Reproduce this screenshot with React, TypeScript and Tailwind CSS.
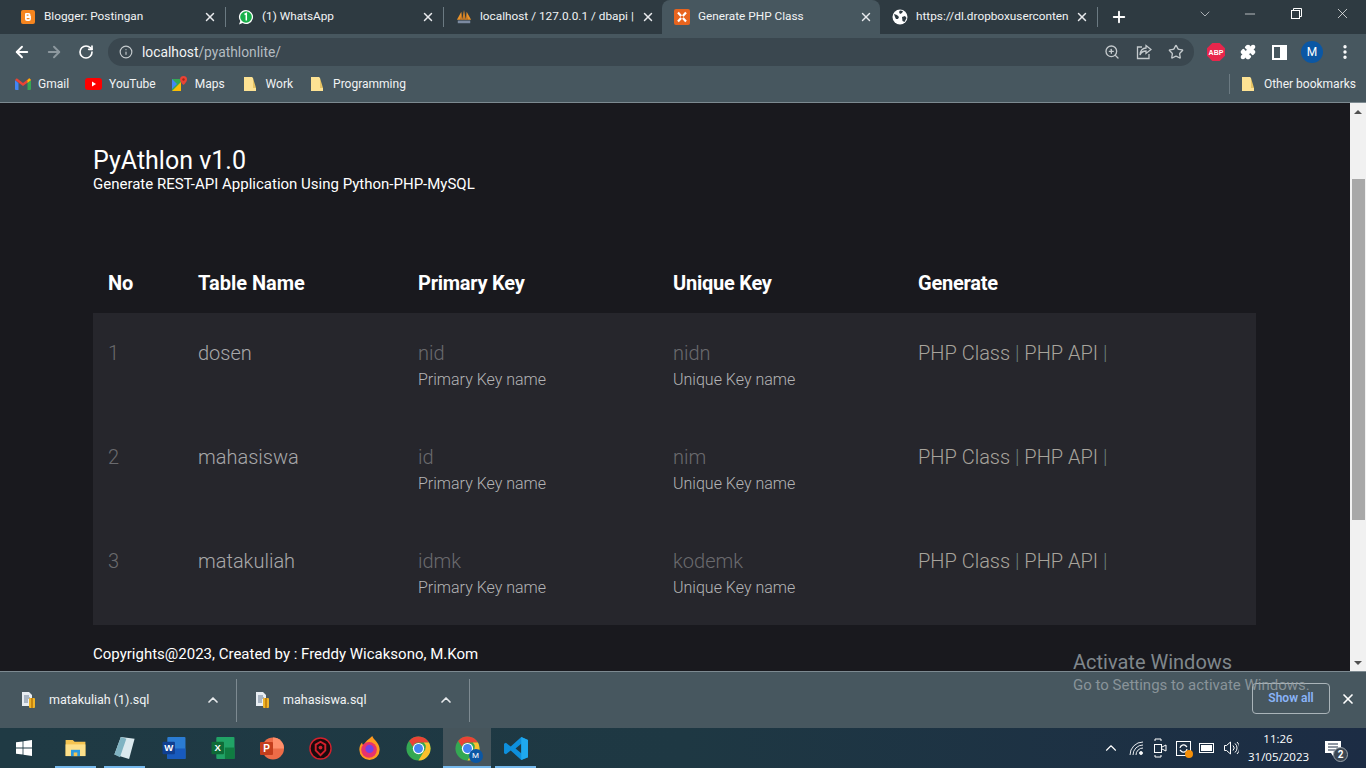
import React from "react";
import { ArrowLeft, ArrowRight, RotateCw, Info, ZoomIn, Star, Puzzle, EllipsisVertical, X, Plus, Minus, ChevronDown, ChevronUp } from "lucide-react";

// =======================================================================
// SMALL DRAWN ICONS
// =======================================================================
function Folder() {
  return (
    <svg width="12" height="14" viewBox="0 0 12 14">
      <path d="M0 0h8l1 1v10h3v3H0z" fill="#fde293" />
      <path d="M9 1v10h3z" fill="#e8c565" />
    </svg>
  );
}

function BloggerIcon() {
  return (
    <svg width="16" height="16" viewBox="0 0 16 16">
      <rect x="1" y="1" width="14" height="14" rx="2" fill="#f5851f" />
      <path d="M5.500 4h3.200A2 2 0 0 1 10.500 6v1h.4v3a2 2 0 0 1-2 2H7a2 2 0 0 1-2-2V5z" fill="#fff" />
      <path d="M6.700 6.200h1.800M6.700 9.600h2.800" stroke="#f5851f" strokeWidth="1.200" />
    </svg>
  );
}

function WhatsappIcon() {
  return (
    <svg width="16" height="17" viewBox="0 0 16 17">
      <path d="M8 1a7 7 0 1 1-3.400 13.100L1 15.500l1.300-3.400A7 7 0 0 1 8 1z" fill="#fff" />
      <circle cx="8" cy="8" r="5.800" fill="#19b04a" />
      <path d="M6.500 5.500l1.800-1V11.500" stroke="#fff" strokeWidth="1.500" fill="none" />
    </svg>
  );
}

function PmaIcon() {
  return (
    <svg width="18" height="16" viewBox="0 0 18 16">
      <path d="M1 11L6 2l1 9zM7 11l2-11 2 11zM11 11l1-9 5 9z" fill="#e8922a" />
      <path d="M8.500 11L9 2l.5 9zM5 11l1-6v6zM13 11l-1-6v6z" fill="#8f4a14" />
      <rect x="2" y="12" width="14" height="3" fill="#7c8aa0" />
    </svg>
  );
}

function XamppIcon() {
  return (
    <svg width="16" height="16" viewBox="0 0 16 16">
      <rect width="16" height="16" rx="2" fill="#e8641e" />
      <path d="M4 3.500L12 12.500M12 3.500L4 12.500" stroke="#fff" strokeWidth="2.200" />
      <path d="M6.500 8a1.500 1.500 0 1 0 3 0 1.500 1.500 0 1 0-3 0" fill="#e8641e" />
    </svg>
  );
}

function GlobeIcon() {
  return (
    <svg width="16" height="16" viewBox="0 0 16 16">
      <circle cx="8" cy="8" r="7.500" fill="#fff" />
      <path d="M2 5l3 1 2 2-1 2-2 0-1-2zM8 1.500l3 .5-1 2-2 1-1-2zM10 8l3-1 1.500 2-2 4-2-1z" fill="#2e3a41" />
    </svg>
  );
}

function GmailIcon() {
  return (
    <svg width="16" height="12" viewBox="0 0 16 12">
      <path d="M0 2v9a1 1 0 0 0 1 1h2.500V5z" fill="#4285f4" />
      <path d="M16 2v9a1 1 0 0 1-1 1h-2.500V5z" fill="#34a853" />
      <path d="M0 2l1.800-1.700L8 5l6.200-4.700L16 2 8 8z" fill="#ea4335" />
      <path d="M12.500 2.200L14.200.3 16 2l-3.500 3z" fill="#fbbc04" />
    </svg>
  );
}

function YoutubeIcon() {
  return (
    <svg width="17" height="12" viewBox="0 0 17 12">
      <rect width="17" height="12" rx="3" fill="#f00" />
      <path d="M7 3.500v5L11 6z" fill="#fff" />
    </svg>
  );
}

function MapsIcon() {
  return (
    <svg width="16" height="16" viewBox="0 0 16 16">
      <path d="M1 3h9v12H1z" fill="#34a853" />
      <path d="M1 15L10 6v9z" fill="#fbbc04" />
      <path d="M1 3l5 5-5 5z" fill="#4285f4" />
      <path d="M12.500 0A3.500 3.500 0 0 1 16 3.500C16 6 12.500 9 12.500 9S9 6 9 3.500A3.500 3.500 0 0 1 12.500 0z" fill="#ea4335" />
      <circle cx="12.500" cy="3.500" r="1.200" fill="#a52714" />
    </svg>
  );
}

function ShareIcon() {
  return (
    <svg width="16" height="16" viewBox="0 0 16 16" fill="none" stroke="#c4cacd" strokeWidth="1.300">
      <path d="M6 3H1.500v11.500H13V10" />
      <path d="M10 1.500L15 5.500 10 9.500V7C7 7 5 8.500 4 11c0-4 2.500-7 6-7z" />
    </svg>
  );
}

function AbpIcon() {
  return (
    <svg width="18" height="18" viewBox="0 0 18 18">
      <path d="M5.300 0h7.400L18 5.300v7.400L12.700 18H5.300L0 12.700V5.300z" fill="#e8264c" />
      <text x="9" y="11.500" fontSize="7" fontWeight="700" textAnchor="middle" fill="#fff" fontFamily="Liberation Sans, sans-serif">ABP</text>
    </svg>
  );
}

function SqlFile() {
  return (
    <svg width="15" height="16" viewBox="0 0 15 16">
      <path d="M1 0h7l3 3v11H1z" fill="#e8edf2" />
      <path d="M3 4h5M3 6h6M3 8h4M3 10h4" stroke="#6b7d92" />
      <rect x="8" y="6" width="6" height="10" rx="1" fill="#f0b429" />
      <rect x="10" y="6" width="2" height="10" fill="#c78610" />
    </svg>
  );
}

function ChromeLogo() {
  return (
    <svg width="25" height="25" viewBox="0 0 28 28">
      <circle cx="14" cy="14" r="13.500" fill="#34a853" />
      <path d="M14 .5a13.500 13.500 0 0 1 11.700 6.800H14A6.700 6.700 0 0 0 7.700 12L3.500 5.500A13.500 13.500 0 0 1 14 .5z" fill="#ea4335" />
      <path d="M25.700 7.300A13.500 13.500 0 0 1 14 27.500l5.800-10a6.700 6.700 0 0 0 0-10.200z" fill="#fbc02d" />
      <circle cx="14" cy="14" r="6.300" fill="#fff" />
      <circle cx="14" cy="14" r="5" fill="#4285f4" />
    </svg>
  );
}

// =======================================================================
// CHROME: TABS, TOOLBAR, BOOKMARKS
// =======================================================================
const tabs = [
  { title: "Blogger: Postingan", icon: <BloggerIcon /> },
  { title: "(1) WhatsApp", icon: <WhatsappIcon /> },
  { title: "localhost / 127.0.0.1 / dbapi |", icon: <PmaIcon /> },
  { title: "Generate PHP Class", icon: <XamppIcon />, active: true },
  { title: "https://dl.dropboxuserconten", icon: <GlobeIcon /> },
];

function TabBar() {
  return (
    <div className="h-[34px] flex items-stretch bg-[#2e3a41] pl-2 shrink-0">
      {tabs.map((tab, i) => (
        <div
          key={tab.title}
          className={`w-[218px] flex items-center pl-3 pr-[7px] gap-2 rounded-t-lg ${tab.active ? "bg-[#47575f]" : ""}`}
        >
          <span className="w-4 flex justify-center shrink-0">{tab.icon}</span>
          <span className="flex-1 min-w-0 whitespace-nowrap text-[11.800px] text-[#f1f3f4]">{tab.title}</span>
          <X size={14} strokeWidth={2.5} className="text-[#e8eaed] shrink-0" />
          {(i === 0 || i === 1 || i === 4) && <span className="w-px h-5 bg-[#6b7a82] shrink-0 -mr-[7px]" />}
        </div>
      ))}
      <div className="flex items-center ml-[12px]">
        <Plus size={18} strokeWidth={2.5} className="text-white" />
      </div>
      <div className="pt-[6px] ml-[69px]">
        <ChevronDown size={16} strokeWidth={1} className="text-[#e8eaed]" />
      </div>
      <div className="pt-[6px] ml-[29px]">
        <Minus size={16} strokeWidth={1} className="text-white" />
      </div>
      <div className="pt-[8px] ml-[33px]">
        <svg width="11" height="11" viewBox="0 0 11 11" fill="none" stroke="#fff">
          <rect x="0.500" y="2.500" width="8" height="8" />
          <path d="M2.500 2.500V.5h8v8H8.500" />
        </svg>
      </div>
      <div className="pt-[5px] ml-[32px]">
        <X size={17} strokeWidth={1} className="text-white" />
      </div>
    </div>
  );
}

function Toolbar() {
  return (
    <div className="h-[37px] bg-[#47575f] flex items-center pb-[1px] pl-[13px] shrink-0">
      <ArrowLeft size={18} strokeWidth={2.5} className="text-white" />
      <ArrowRight size={18} strokeWidth={2.5} className="text-[#8d989e] ml-[14px]" />
      <RotateCw size={16} strokeWidth={2.5} className="text-white ml-[15px]" />
      <div className="w-[1086px] h-[28px] ml-[14px] rounded-full bg-[#3a474f] flex items-center pl-[11px] pr-[10px]">
        <Info size={14} className="text-[#c4cacd]" />
        <span className="ml-[9px] text-[13.800px] text-[#f1f3f4]">localhost<span className="text-[#b4bcc1]">/pyathlonlite/</span></span>
        <ZoomIn size={16} className="text-[#c4cacd] ml-auto" />
        <span className="ml-4"><ShareIcon /></span>
        <Star size={16} className="text-[#c4cacd] ml-4" />
      </div>
      <span className="ml-[13px] flex"><AbpIcon /></span>
      <Puzzle size={16} className="text-white fill-white ml-[15px]" />
      <span className="ml-[16px] w-[15px] h-[15px] border-[2px] border-white flex justify-end"><span className="w-[5px] bg-white" /></span>
      <div className="w-[22px] h-[22px] ml-[14px] rounded-full bg-[#0b57a4] flex items-center justify-center text-[12px] text-white">M</div>
      <EllipsisVertical size={18} strokeWidth={2.5} className="text-white ml-[13px]" />
    </div>
  );
}

function Bookmark({ icon, label, className = "" }: { icon: React.ReactNode; label: string; className?: string }) {
  return (
    <div className={`flex items-center ${className}`}>
      {icon}
      <span className="text-[12px] text-[#f1f3f4] whitespace-nowrap">{label}</span>
    </div>
  );
}

function BookmarksBar() {
  return (
    <div className="h-[32px] bg-[#47575f] border-b border-[#7d8a91] flex items-center pb-[5px] pl-[15px] shrink-0">
      <Bookmark icon={<GmailIcon />} label="Gmail" className="gap-[7px]" />
      <Bookmark icon={<YoutubeIcon />} label="YouTube" className="gap-[7px] ml-4" />
      <Bookmark icon={<MapsIcon />} label="Maps" className="gap-2 ml-[15px]" />
      <Bookmark icon={<Folder />} label="Work" className="gap-[10px] ml-[19px]" />
      <Bookmark icon={<Folder />} label="Programming" className="gap-[10px] ml-[18px]" />
      <span className="ml-auto w-px h-[20px] bg-[#6b7a82]" />
      <Bookmark icon={<Folder />} label="Other bookmarks" className="gap-[10px] ml-3 pr-[10px]" />
    </div>
  );
}

// =======================================================================
// PAGE CONTENT
// =======================================================================
const rows = [
  { no: 1, table: "dosen", pk: "nid", uk: "nidn" },
  { no: 2, table: "mahasiswa", pk: "id", uk: "nim" },
  { no: 3, table: "matakuliah", pk: "idmk", uk: "kodemk" },
];

function Page() {
  return (
    <div className="flex-1 min-h-0 flex bg-[#19191e]">
      <div className="flex-1 min-w-0 pl-[93px] pr-[94px] pt-[44px] font-['Roboto']">
        <h1 className="text-[25px] leading-[28px] text-white">PyAthlon v1.0</h1>
        <p className="text-[15px] leading-[18px] text-white">Generate REST-API Application Using Python-PHP-MySQL</p>

        <table className="w-full mt-[58px] table-fixed border-collapse">
          <colgroup>
            <col className="w-[105px]" />
            <col className="w-[220px]" />
            <col className="w-[255px]" />
            <col className="w-[245px]" />
            <col />
          </colgroup>
          <thead>
            <tr className="h-[62px] text-left text-[20px] text-white">
              <th className="pl-[15px] pt-[2px] font-bold">No</th>
              <th className="pt-[2px] font-bold">Table Name</th>
              <th className="pt-[2px] font-bold tracking-[-0.25px]">Primary Key</th>
              <th className="pt-[2px] font-bold tracking-[-0.25px]">Unique Key</th>
              <th className="pt-[2px] font-bold tracking-[-0.25px]">Generate</th>
            </tr>
          </thead>
          <tbody className="bg-[#26262c]">
            {rows.map((r) => (
              <tr key={r.no} className="h-[104px] align-top font-light">
                <td className="pl-[15px] pt-[28px] text-[20px] leading-6 text-[#6a6a6e]">{r.no}</td>
                <td className="pt-[28px] text-[20px] leading-6 text-[#a8a8aa]">{r.table}</td>
                <td className="pt-[28px]">
                  <div className="text-[20px] leading-6 text-[#6a6a6e]">{r.pk}</div>
                  <div className="text-[16px] leading-6 mt-[3px] text-[#b4b4b6]">Primary Key name</div>
                </td>
                <td className="pt-[28px]">
                  <div className="text-[20px] leading-6 text-[#6a6a6e]">{r.uk}</div>
                  <div className="text-[16px] leading-6 mt-[3px] text-[#b4b4b6]">Unique Key name</div>
                </td>
                <td className="pt-[28px] text-[20px] leading-6 text-[#6b7d78] whitespace-nowrap">
                  <span className="text-[#a8a49c]">PHP Class</span> | <span className="text-[#a8a49c]">PHP API</span> |
                </td>
              </tr>
            ))}
          </tbody>
        </table>

        <p className="mt-[20px] text-[15px] leading-[18px] text-white">Copyrights@2023, Created by : Freddy Wicaksono, M.Kom</p>
      </div>

      <div className="w-[16px] shrink-0 bg-[#f1f1f1] flex flex-col items-center">
        <div className="h-[16px] pt-[1px] flex items-center justify-center">
          <span className="w-0 h-0 border-x-[4px] border-x-transparent border-b-[4px] border-b-[#505050]" />
        </div>
        <div className="w-[13px] h-[341px] mt-[60px] bg-[#a8a8a8]" />
        <div className="mt-auto h-[16px] flex items-center justify-center">
          <span className="w-0 h-0 border-x-[4px] border-x-transparent border-t-[4px] border-t-[#505050]" />
        </div>
      </div>
    </div>
  );
}

// =======================================================================
// DOWNLOAD BAR & TASKBAR
// =======================================================================
function DownloadItem({ name, className }: { name: string; className: string }) {
  return (
    <div className={`${className} h-[57px] flex items-center pr-[16px] relative`}>
      <SqlFile />
      <span className="ml-[13px] text-[12.500px] text-[#f1f3f4]">{name}</span>
      <ChevronUp size={16} strokeWidth={2.5} className="text-[#e8eaed] ml-auto" />
      <span className="absolute right-0 top-[7px] w-px h-[43px] bg-[#7d8a91]" />
    </div>
  );
}

function DownloadBar() {
  return (
    <div className="h-[57px] bg-[#47575f] border-t border-[#7d8a91] flex items-center shrink-0">
      <DownloadItem name="matakuliah (1).sql" className="w-[237px] pl-[21px]" />
      <DownloadItem name="mahasiswa.sql" className="w-[233px] pl-[18px]" />
      <button className="ml-auto mb-[4px] w-[78px] h-[31px] rounded-[4px] border border-[#aab4b9] text-[12px] font-semibold text-[#8ab4f8]">Show all</button>
      <X size={16} strokeWidth={2.5} className="text-white ml-[10px] mr-[10px] mb-[2px]" />
    </div>
  );
}

function Slot({ children, active, underline, className = "w-[49px]" }: { children: React.ReactNode; active?: boolean; underline?: boolean; className?: string }) {
  return (
    <div className={`${className} h-[40px] flex items-center justify-center relative ${active ? "bg-[#46555c]" : ""}`}>
      {children}
      {underline && <span className={`absolute bottom-0 h-[2px] bg-[#76b9ed] ${active ? "left-0 right-0" : "left-[4px] right-[4px]"}`} />}
    </div>
  );
}

function Taskbar() {
  return (
    <div className="h-[40px] bg-gradient-to-r from-[#1f3a44] via-[#1e3843] to-[#1c2c44] flex items-center shrink-0">
      <div className="w-[51px] pr-[3px] flex justify-center">
        <svg width="16" height="16" viewBox="0 0 16 16" fill="#fff">
          <path d="M0 2.300l6.600-.9v6.200H0zM7.400 1.300L16 0v7.600H7.400zM0 8.400h6.600v6.200L0 13.700zM7.400 8.400H16V16l-8.600-1.200z" />
        </svg>
      </div>
      <Slot underline>
        <svg width="21" height="18" viewBox="0 0 22 20">
          <path d="M0 1h8l2 2h12v16H0z" fill="#f5c451" />
          <rect x="0" y="6" width="22" height="13" fill="#fde08a" />
          <rect x="6" y="12" width="10" height="7" fill="#2b9be0" />
          <rect x="9" y="15" width="4" height="4" fill="#f5c451" />
        </svg>
      </Slot>
      <Slot underline>
        <svg width="23" height="22" viewBox="0 0 22 24">
          <path d="M7 0l15 2-6 22L0 19z" fill="#dbe9ee" />
          <path d="M7 0l6 2-7 20-6-3z" fill="#7fb3c2" />
        </svg>
      </Slot>
      <Slot>
        <svg width="24" height="22" viewBox="0 0 24 23">
          <rect x="5" width="19" height="23" rx="1" fill="#2b7cd3" />
          <rect x="5" y="12" width="19" height="11" fill="#185abd" />
          <rect y="5" width="13" height="13" rx="1" fill="#103f91" />
          <text x="6.500" y="15" fontSize="10" fontWeight="700" textAnchor="middle" fill="#fff" fontFamily="Liberation Sans, sans-serif">W</text>
        </svg>
      </Slot>
      <Slot>
        <svg width="24" height="22" viewBox="0 0 24 23">
          <rect x="5" width="19" height="23" rx="1" fill="#21a366" />
          <rect x="14" y="11" width="10" height="12" fill="#107c41" />
          <rect y="5" width="13" height="13" rx="1" fill="#0e6b37" />
          <text x="6.500" y="15" fontSize="10" fontWeight="700" textAnchor="middle" fill="#fff" fontFamily="Liberation Sans, sans-serif">X</text>
        </svg>
      </Slot>
      <Slot>
        <svg width="24" height="23" viewBox="0 0 24 23">
          <circle cx="13" cy="11.500" r="11" fill="#ed6c47" />
          <path d="M13 .5a11 11 0 0 1 11 11H13z" fill="#ff8f6b" />
          <rect y="5" width="13" height="13" rx="1" fill="#c43e1c" />
          <text x="6.500" y="15" fontSize="10" fontWeight="700" textAnchor="middle" fill="#fff" fontFamily="Liberation Sans, sans-serif">P</text>
        </svg>
      </Slot>
      <Slot>
        <svg width="23" height="23" viewBox="0 0 24 24">
          <circle cx="12" cy="12" r="11" fill="#1a0a0c" stroke="#d3202c" strokeWidth="1.500" />
          <path d="M12 5l5 3v6l-5 5-5-5V8z" fill="none" stroke="#d3202c" strokeWidth="2" />
          <circle cx="12" cy="11" r="2" fill="#d3202c" />
        </svg>
      </Slot>
      <Slot>
        <svg width="23" height="24" viewBox="0 0 24 26">
          <path d="M15 0c1 4 8 7 8 15a11 11 0 0 1-22 0c0-3 1-6 3-8 0 2 1 3 2 3 1-4 5-6 9-10z" fill="#ff9a1f" />
          <circle cx="11.500" cy="15" r="8.500" fill="#e8336d" />
          <circle cx="12" cy="14" r="4.500" fill="#7542e5" />
        </svg>
      </Slot>
      <Slot>
        <ChromeLogo />
      </Slot>
      <Slot active underline className="w-[48px]">
        <div className="relative flex">
          <ChromeLogo />
          <span className="absolute -right-[3px] -bottom-[2px] w-[14px] h-[14px] rounded-full bg-[#0b57a4] text-[8px] leading-[14px] text-center text-white">M</span>
        </div>
      </Slot>
      <Slot underline>
        <svg width="24" height="23" viewBox="0 0 25 24">
          <path d="M18 0l7 3v18l-7 3-11-10-5 4-2-1V7l2-1 5 4zM18 7l-6 5 6 5z" fill="#0e8fdc" />
          <path d="M18 0l7 3v18l-7 3z" fill="#1fa8ee" />
        </svg>
      </Slot>

      <div className="ml-auto flex items-center text-white">
        <ChevronUp size={18} strokeWidth={1.5} className="mr-[8px]" />
        <svg width="16" height="16" viewBox="0 0 16 16" fill="none" stroke="#e8eaed" className="mr-[9px]">
          <path d="M2 15A13 13 0 0 1 15 2M5 15A10 10 0 0 1 15 5M8 15a7 7 0 0 1 7-7" />
          <circle cx="13" cy="13" r="1.500" fill="#fff" />
        </svg>
        <svg width="14" height="20" viewBox="0 0 14 20" fill="none" stroke="#fff" className="mr-[9px]">
          <path d="M2 3V1h6v2M2 17v2h6v-2" />
          <rect x="1.500" y="6.500" width="7" height="8" />
          <path d="M9 9l4-2v6l-4-2" />
        </svg>
        <span className="w-[15px] h-[15px] border border-white mr-[8px] relative flex items-center justify-center">
          <svg width="9" height="9" viewBox="0 0 9 9" fill="none" stroke="#fff" strokeWidth="1.200">
            <path d="M1 4a3.500 3.500 0 0 1 6-2l1 1M8 5a3.500 3.500 0 0 1-6 2L1 6" />
          </svg>
          <span className="absolute -right-[3px] -bottom-[3px] w-[8px] h-[8px] rounded-full bg-[#f79009]" />
        </span>
        <span className="w-[15px] h-[10px] border border-white p-[1px] mr-[9px] flex"><span className="flex-1 bg-white" /></span>
        <svg width="16" height="16" viewBox="0 0 16 16" fill="none" stroke="#fff" className="mr-[9px]">
          <path d="M1.500 5.500h2l4-3.500v12l-4-3.500h-2zM10 5.500a3.500 3.500 0 0 1 0 5M12 3.500a6 6 0 0 1 0 9M14 2a8 8 0 0 1 0 12" />
        </svg>
        <div className="w-[60px] text-center text-[11.500px] leading-[18px] text-white font-['Open_Sans']">
          <div>11:26</div>
          <div>31/05/2023</div>
        </div>
        <div className="w-[44px] ml-[3px] mr-[11px] flex justify-center relative">
          <svg width="16" height="15" viewBox="0 0 16 15">
            <path d="M0 0h16v12h-6l-2 3-2-3H0z" fill="#fff" />
            <path d="M3 3h10M3 6h10M3 9h7" stroke="#1c2c44" />
          </svg>
          <span className="absolute left-[22px] top-[6px] w-[15px] h-[15px] rounded-full bg-[#3b4652] border border-[#9aa3ab] text-[10px] leading-[13px] text-center font-bold">2</span>
        </div>
      </div>
    </div>
  );
}

export default function App() {
  return (
    <div className="w-[1366px] h-[768px] overflow-hidden flex flex-col relative font-['Roboto']">
      <TabBar />
      <Toolbar />
      <BookmarksBar />
      <Page />
      <DownloadBar />
      <Taskbar />

      {/* Windows activation watermark sits on top of everything */}
      <div className="absolute left-[1073px] top-[650px] pointer-events-none text-[#9aa3a8]">
        <div className="text-[20px] leading-[24px] opacity-80">Activate Windows</div>
        <div className="text-[15px] leading-[22px] opacity-80 whitespace-nowrap">Go to Settings to activate Windows.</div>
      </div>
    </div>
  );
}
